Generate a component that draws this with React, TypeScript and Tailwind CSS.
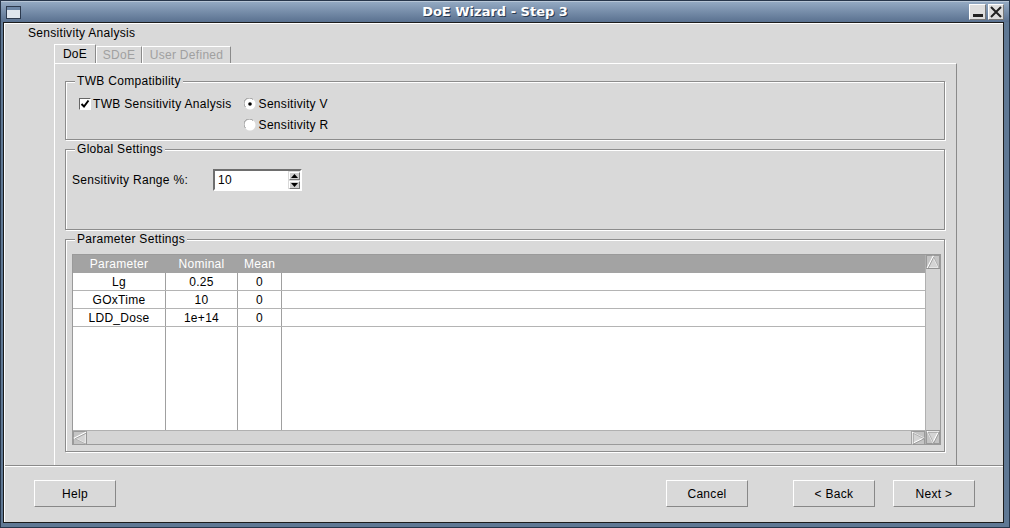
import React from "react";

const SANS = "font-['Liberation_Sans',Arial,sans-serif]";

function RaisedButton({ label }: { label: string }) {
  return (
    <button className="h-[27px] w-[82px] border border-t-white border-l-white border-r-[#888] border-b-[#888] bg-[#d9d9d9] text-[12px] tracking-[0.3px] text-black">
      {label}
    </button>
  );
}

function Group({ title, className, children }: { title: string; className: string; children?: React.ReactNode }) {
  return (
    <fieldset className={`border border-[#8c8c8c] shadow-[inset_1px_1px_0_#fff,1px_1px_0_#fff] ${className}`}>
      <legend className="ml-[9px] h-[14px] bg-[#d9d9d9] px-[2px] text-[12px] leading-[14px] text-black">{title}</legend>
      {children}
    </fieldset>
  );
}

function Radio({ checked }: { checked?: boolean }) {
  return (
    <svg width="12" height="12" viewBox="0 0 12 12">
      <circle cx="6" cy="6" r="5.5" fill="#fff" />
      <path d="M1.5 9 A5 5 0 0 1 9 1.5" stroke="#9a9a9a" fill="none" strokeWidth="1" />
      {checked && <circle cx="6" cy="6" r="1.8" fill="#000" />}
    </svg>
  );
}

function Arrow({ dir }: { dir: "up" | "down" | "left" | "right" }) {
  const pts = {
    up: "7,1.5 12.5,12.5 1.5,12.5",
    down: "1.5,1.5 12.5,1.5 7,12.5",
    left: "1.5,7 12.5,1.5 12.5,12.5",
    right: "1.5,1.5 12.5,7 1.5,12.5",
  }[dir];
  return (
    <svg width="14" height="14" viewBox="0 0 14 14" className="block">
      <rect x="0.5" y="0.5" width="13" height="13" fill="#c4c4c4" stroke="#9a9a9a" />
      <polygon points={pts} fill="#d4d4d4" stroke="#fff" strokeWidth="1.2" />
      <polygon points={pts} fill="none" stroke="#8a8a8a" strokeWidth="0.7" transform="translate(0.7,0.7)" />
    </svg>
  );
}

const rows = [
  ["Lg", "0.25", "0"],
  ["GOxTime", "10", "0"],
  ["LDD_Dose", "1e+14", "0"],
];

function Cells({ a, b, c, h, line }: { a: string; b: string; c: string; h: string; line: boolean }) {
  return (
    <div className={`flex ${h} ${line ? "border-b border-[#b4b4b4]" : ""}`}>
      <div className="w-[92px] text-center leading-[18px]">{a}</div>
      <div className="w-[1px] bg-[#a0a0a0]" />
      <div className="w-[71px] text-center leading-[18px]">{b}</div>
      <div className="w-[1px] bg-[#a0a0a0]" />
      <div className="w-[43px] text-center leading-[18px]">{c}</div>
      <div className="w-[1px] bg-[#a0a0a0]" />
      <div className="flex-1" />
    </div>
  );
}

export default function App() {
  return (
    <div className={`${SANS} flex h-[528px] w-[1010px] flex-col overflow-hidden border border-[#27364a] bg-[#5f7894] text-[12px] tracking-[0.3px] text-black`}>
      {/* title bar */}
      <div className="relative flex h-[21px] items-center bg-gradient-to-b from-[#93a9c2] to-[#5a7190] border-t border-[#b7c6d6]">
        <div className="ml-[5px] flex h-[13px] w-[15px] flex-col border border-[#2c3a4e] bg-[#dfe6ee]">
          <div className="h-[3px] bg-[#6d87a6]" />
        </div>
        <div className="flex-1 text-center font-['DejaVu_Sans',sans-serif] text-[13px] font-bold tracking-normal text-white [text-shadow:1px_1px_0_#2a3a50]">
          DoE Wizard - Step 3
        </div>
        <div className="mr-[5px] flex gap-[2px]">
          <div className="flex h-[16px] w-[17px] items-end justify-center border border-t-white border-l-white border-r-[#777] border-b-[#777] bg-[#dedede] pb-[2px]">
            <div className="h-[3px] w-[10px] bg-[#222]" />
          </div>
          <div className="flex h-[16px] w-[16px] items-center justify-center border border-t-white border-l-white border-r-[#777] border-b-[#777] bg-[#dedede]">
            <svg width="12" height="12" viewBox="0 0 12 12">
              <path d="M1 1 L11 11 M11 1 L1 11" stroke="#222" strokeWidth="2" />
            </svg>
          </div>
        </div>
      </div>

      {/* window body */}
      <div className="ml-[2px] mr-[5px] mb-[4px] flex flex-1 flex-col border border-[#1c1c1c] bg-[#d9d9d9]">
        <div className="flex flex-1 flex-col border-t border-l border-white">
          <div className="ml-[23px] mt-[2px] leading-[14px]">Sensitivity Analysis</div>

          {/* tabs */}
          <div className="ml-[49px] mt-[4px] flex h-[19px] items-end">
            <div className="flex h-[19px] w-[42px] items-center justify-center border-l border-t border-r border-l-white border-t-white border-r-[#8a8a8a] pb-[1px]">
              DoE
            </div>
            <div className="flex h-[17px] w-[46px] items-center justify-center border-l border-t border-r border-l-white border-t-white border-r-[#8a8a8a] text-[#a0a0a0]">
              SDoE
            </div>
            <div className="flex h-[17px] w-[89px] items-center justify-center border-l border-t border-r border-l-white border-t-white border-r-[#8a8a8a] text-[#a0a0a0]">
              User Defined
            </div>
          </div>

          {/* tab panel */}
          <div className="ml-[49px] flex h-[402px] w-[903px] flex-col border-l border-t border-r border-l-white border-t-white border-r-[#8a8a8a] pl-[10px] pr-[11px] pt-[10px]">
            <Group title="TWB Compatibility" className="h-[66px]">
              <div className="mt-[9px] flex">
                <div className="ml-[13px] flex h-[14px] items-center">
                  <div className="flex h-[12px] w-[12px] items-center justify-center border border-t-[#666] border-l-[#666] border-r-white border-b-white bg-white">
                    <svg width="10" height="10" viewBox="0 0 10 10">
                      <path d="M1.5 5 L4 7.5 L8.5 1.5" stroke="#000" strokeWidth="2" fill="none" />
                    </svg>
                  </div>
                  <span className="ml-[2px] leading-[14px]">TWB Sensitivity Analysis</span>
                </div>
                <div className="ml-[12px] flex flex-col gap-[7px]">
                  <div className="flex h-[14px] items-center gap-[3px]">
                    <Radio checked />
                    <span>Sensitivity V</span>
                  </div>
                  <div className="flex h-[14px] items-center gap-[3px]">
                    <Radio />
                    <span>Sensitivity R</span>
                  </div>
                </div>
              </div>
            </Group>

            <Group title="Global Settings" className="mt-[2px] h-[88px]">
              <div className="ml-[6px] mt-[13px] flex items-center">
                <span className="w-[141px]">Sensitivity Range %:</span>
                <div className="flex h-[22px] w-[89px] items-center border-2 border-t-[#6e6e6e] border-l-[#6e6e6e] border-r-white border-b-white bg-[#d9d9d9]">
                  <div className="flex h-full w-[75px] items-center bg-white pl-[3px]">10</div>
                  <div className="ml-px flex flex-col gap-px">
                    <div className="flex h-[8px] w-[11px] items-center justify-center border border-t-white border-l-white border-r-[#777] border-b-[#777] bg-[#d0d0d0]">
                      <svg width="7" height="4" viewBox="0 0 7 4"><polygon points="3.5,0 7,4 0,4" fill="#000" /></svg>
                    </div>
                    <div className="flex h-[8px] w-[11px] items-center justify-center border border-t-white border-l-white border-r-[#777] border-b-[#777] bg-[#d0d0d0]">
                      <svg width="7" height="4" viewBox="0 0 7 4"><polygon points="0,0 7,0 3.5,4" fill="#000" /></svg>
                    </div>
                  </div>
                </div>
              </div>
            </Group>

            <Group title="Parameter Settings" className="mt-[2px] h-[220px]">
              <div className="ml-[6px] mr-[3px] mt-[8px] flex h-[191px] border border-[#9a9a9a]">
                <div className="flex flex-1 flex-col">
                  <div className="flex h-[18px] bg-[#a3a3a3] text-white">
                    <div className="w-[92px] text-center leading-[18px]">Parameter</div>
                    <div className="w-[1px]" />
                    <div className="w-[71px] text-center leading-[18px]">Nominal</div>
                    <div className="w-[1px]" />
                    <div className="w-[43px] text-center leading-[18px]">Mean</div>
                  </div>
                  <div className="flex flex-1 flex-col bg-white">
                    {rows.map((r) => (
                      <Cells key={r[0]} a={r[0]} b={r[1]} c={r[2]} h="h-[18px]" line />
                    ))}
                    <Cells a="" b="" c="" h="flex-1" line={false} />
                  </div>
                  <div className="flex h-[14px] border-t border-[#b0b0b0] bg-[#d4d4d4]">
                    <Arrow dir="left" />
                    <div className="flex-1" />
                    <Arrow dir="right" />
                  </div>
                </div>
                <div className="flex w-[15px] flex-col border-l border-[#b0b0b0] bg-[#d4d4d4]">
                  <Arrow dir="up" />
                  <div className="flex-1" />
                  <Arrow dir="down" />
                </div>
              </div>
            </Group>
          </div>

          {/* separator */}
          <div className="h-[2px] border-t border-[#8a8a8a] bg-white" />

          {/* buttons */}
          <div className="mt-[13px] flex">
            <div className="ml-[29px]">
              <RaisedButton label="Help" />
            </div>
            <div className="ml-auto mr-[28px] flex">
              <RaisedButton label="Cancel" />
              <div className="ml-[45px]">
                <RaisedButton label="< Back" />
              </div>
              <div className="ml-[18px]">
                <RaisedButton label="Next >" />
              </div>
            </div>
          </div>
        </div>
      </div>
    </div>
  );
}
